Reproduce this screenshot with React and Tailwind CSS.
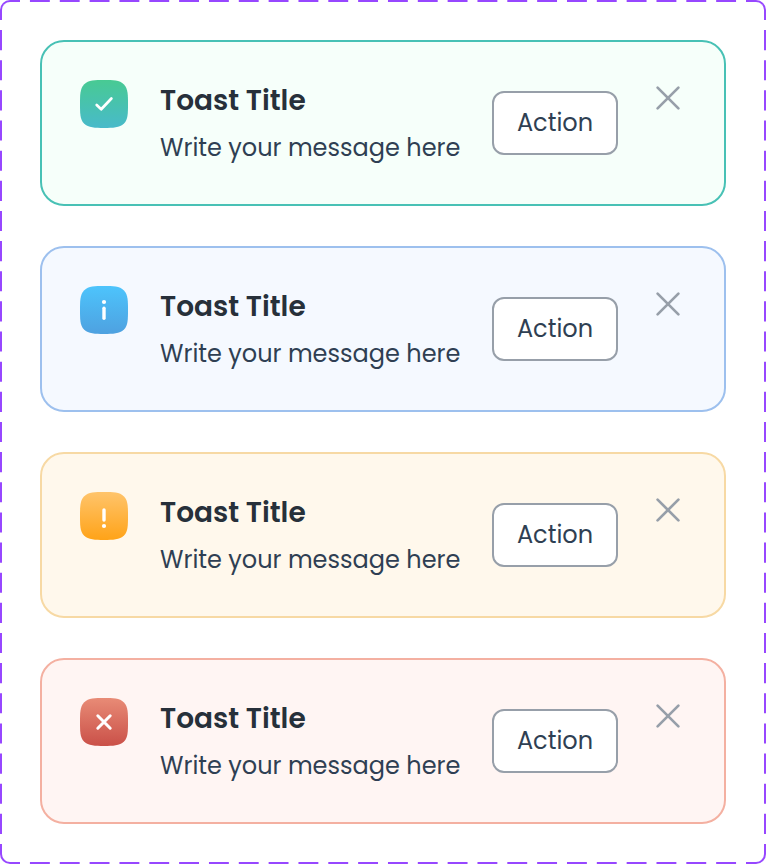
import React from 'react';

const SQUIRCLE =
  'M0 24C0 15 0 8.500 4 4.400C8.500 0 15 0 24 0C33 0 39.500 0 44 4.400C48 8.500 48 15 48 24C48 33 48 39.500 44 43.600C39.500 48 33 48 24 48C15 48 8.500 48 4 43.600C0 39.500 0 33 0 24Z';

const toasts = [
  {
    id: 'success',
    card: 'border-[#48c1b5] bg-[#f6fffa]',
    from: '#48ca93',
    to: '#48baca',
    glyph: <path d="M16.700 25L21.200 29.300L31.400 18.500" strokeWidth="2.700" />,
  },
  {
    id: 'info',
    card: 'border-[#9dc0ee] bg-[#f5f9ff]',
    from: '#4dc4fc',
    to: '#4ea1e0',
    glyph: (
      <>
        <path d="M24 22.300V32.200" strokeWidth="3.400" />
        <circle cx="24" cy="16" r="2.100" fill="#fff" stroke="none" />
      </>
    ),
  },
  {
    id: 'warning',
    card: 'border-[#f7d9a4] bg-[#fff8ec]',
    from: '#ffc46b',
    to: '#ffa318',
    glyph: (
      <>
        <path d="M24 18V28" strokeWidth="3.400" />
        <circle cx="24" cy="34" r="2.100" fill="#fff" stroke="none" />
      </>
    ),
  },
  {
    id: 'error',
    card: 'border-[#f4b0a1] bg-[#fff5f3]',
    from: '#e88b76',
    to: '#ca5048',
    glyph: <path d="M17.800 17.800L30.200 30.200M30.200 17.800L17.800 30.200" strokeWidth="3" />,
  },
];

function StatusIcon({ id, from, to, children }) {
  const gradient = `${id}-gradient`;
  return (
    <svg className="size-12 shrink-0" viewBox="0 0 48 48" fill="none" aria-hidden="true">
      <defs>
        <linearGradient id={gradient} x1="0" y1="0" x2="0" y2="1">
          <stop stopColor={from} />
          <stop offset="1" stopColor={to} />
        </linearGradient>
      </defs>
      <path d={SQUIRCLE} fill={`url(#${gradient})`} />
      <g stroke="#fff" strokeLinecap="round" strokeLinejoin="round">
        {children}
      </g>
    </svg>
  );
}

function Toast({ id, card, from, to, glyph }) {
  return (
    <section role="status" className={`flex items-start gap-8 rounded-3xl border-2 p-[38px] ${card}`}>
      <StatusIcon id={id} from={from} to={to}>
        {glyph}
      </StatusIcon>
      <div className="flex min-w-0 flex-1 flex-col gap-2 whitespace-nowrap">
        <h2 className="text-[28px] leading-[42px] font-semibold text-[#27303a]">Toast Title</h2>
        <p className="text-2xl leading-9 text-[#2f3f53]">Write your message here</p>
      </div>
      <button
        type="button"
        className="h-16 w-[126px] shrink-0 self-center rounded-xl border-2 border-[#979fa9] bg-white text-2xl text-[#2f3f53]"
      >
        Action
      </button>
      <button type="button" aria-label="Close" className="size-9 shrink-0 text-[#979fa9]">
        <svg className="size-9" viewBox="0 0 36 36" fill="none" stroke="currentColor" strokeWidth="2.700" strokeLinecap="round">
          <path d="M7.600 7.600L28.400 28.400M28.400 7.600L7.600 28.400" />
        </svg>
      </button>
    </section>
  );
}

function DashedFrame() {
  const edge = { stroke: '#9747ff', strokeWidth: 2, strokeDasharray: '0 10 20 0' };
  return (
    <div className="pointer-events-none absolute inset-0" aria-hidden="true">
      <div className="absolute top-0 left-0 size-5 rounded-tl-[10px] border-t-2 border-l-2 border-[#9747ff]" />
      <div className="absolute top-0 right-0 size-5 rounded-tr-[10px] border-t-2 border-r-2 border-[#9747ff]" />
      <div className="absolute bottom-0 left-0 size-5 rounded-bl-[10px] border-b-2 border-l-2 border-[#9747ff]" />
      <div className="absolute right-0 bottom-0 size-5 rounded-br-[10px] border-r-2 border-b-2 border-[#9747ff]" />
      <svg className="absolute top-0 left-5 h-0.5 w-[calc(100%-40px)]">
        <line x1="0" y1="1" x2="100%" y2="1" pathLength="730" {...edge} />
      </svg>
      <svg className="absolute bottom-0 left-5 h-0.5 w-[calc(100%-40px)]">
        <line x1="0" y1="1" x2="100%" y2="1" pathLength="730" {...edge} />
      </svg>
      <svg className="absolute top-5 left-0 h-[calc(100%-40px)] w-0.5">
        <line x1="1" y1="0" x2="1" y2="100%" pathLength="820" {...edge} />
      </svg>
      <svg className="absolute top-5 right-0 h-[calc(100%-40px)] w-0.5">
        <line x1="1" y1="0" x2="1" y2="100%" pathLength="820" {...edge} />
      </svg>
    </div>
  );
}

export default function App() {
  return (
    <main className="relative flex flex-col gap-10 bg-white p-10 font-['Poppins','Inter',sans-serif]">
      <DashedFrame />
      {toasts.map((toast) => (
        <Toast key={toast.id} {...toast} />
      ))}
    </main>
  );
}
